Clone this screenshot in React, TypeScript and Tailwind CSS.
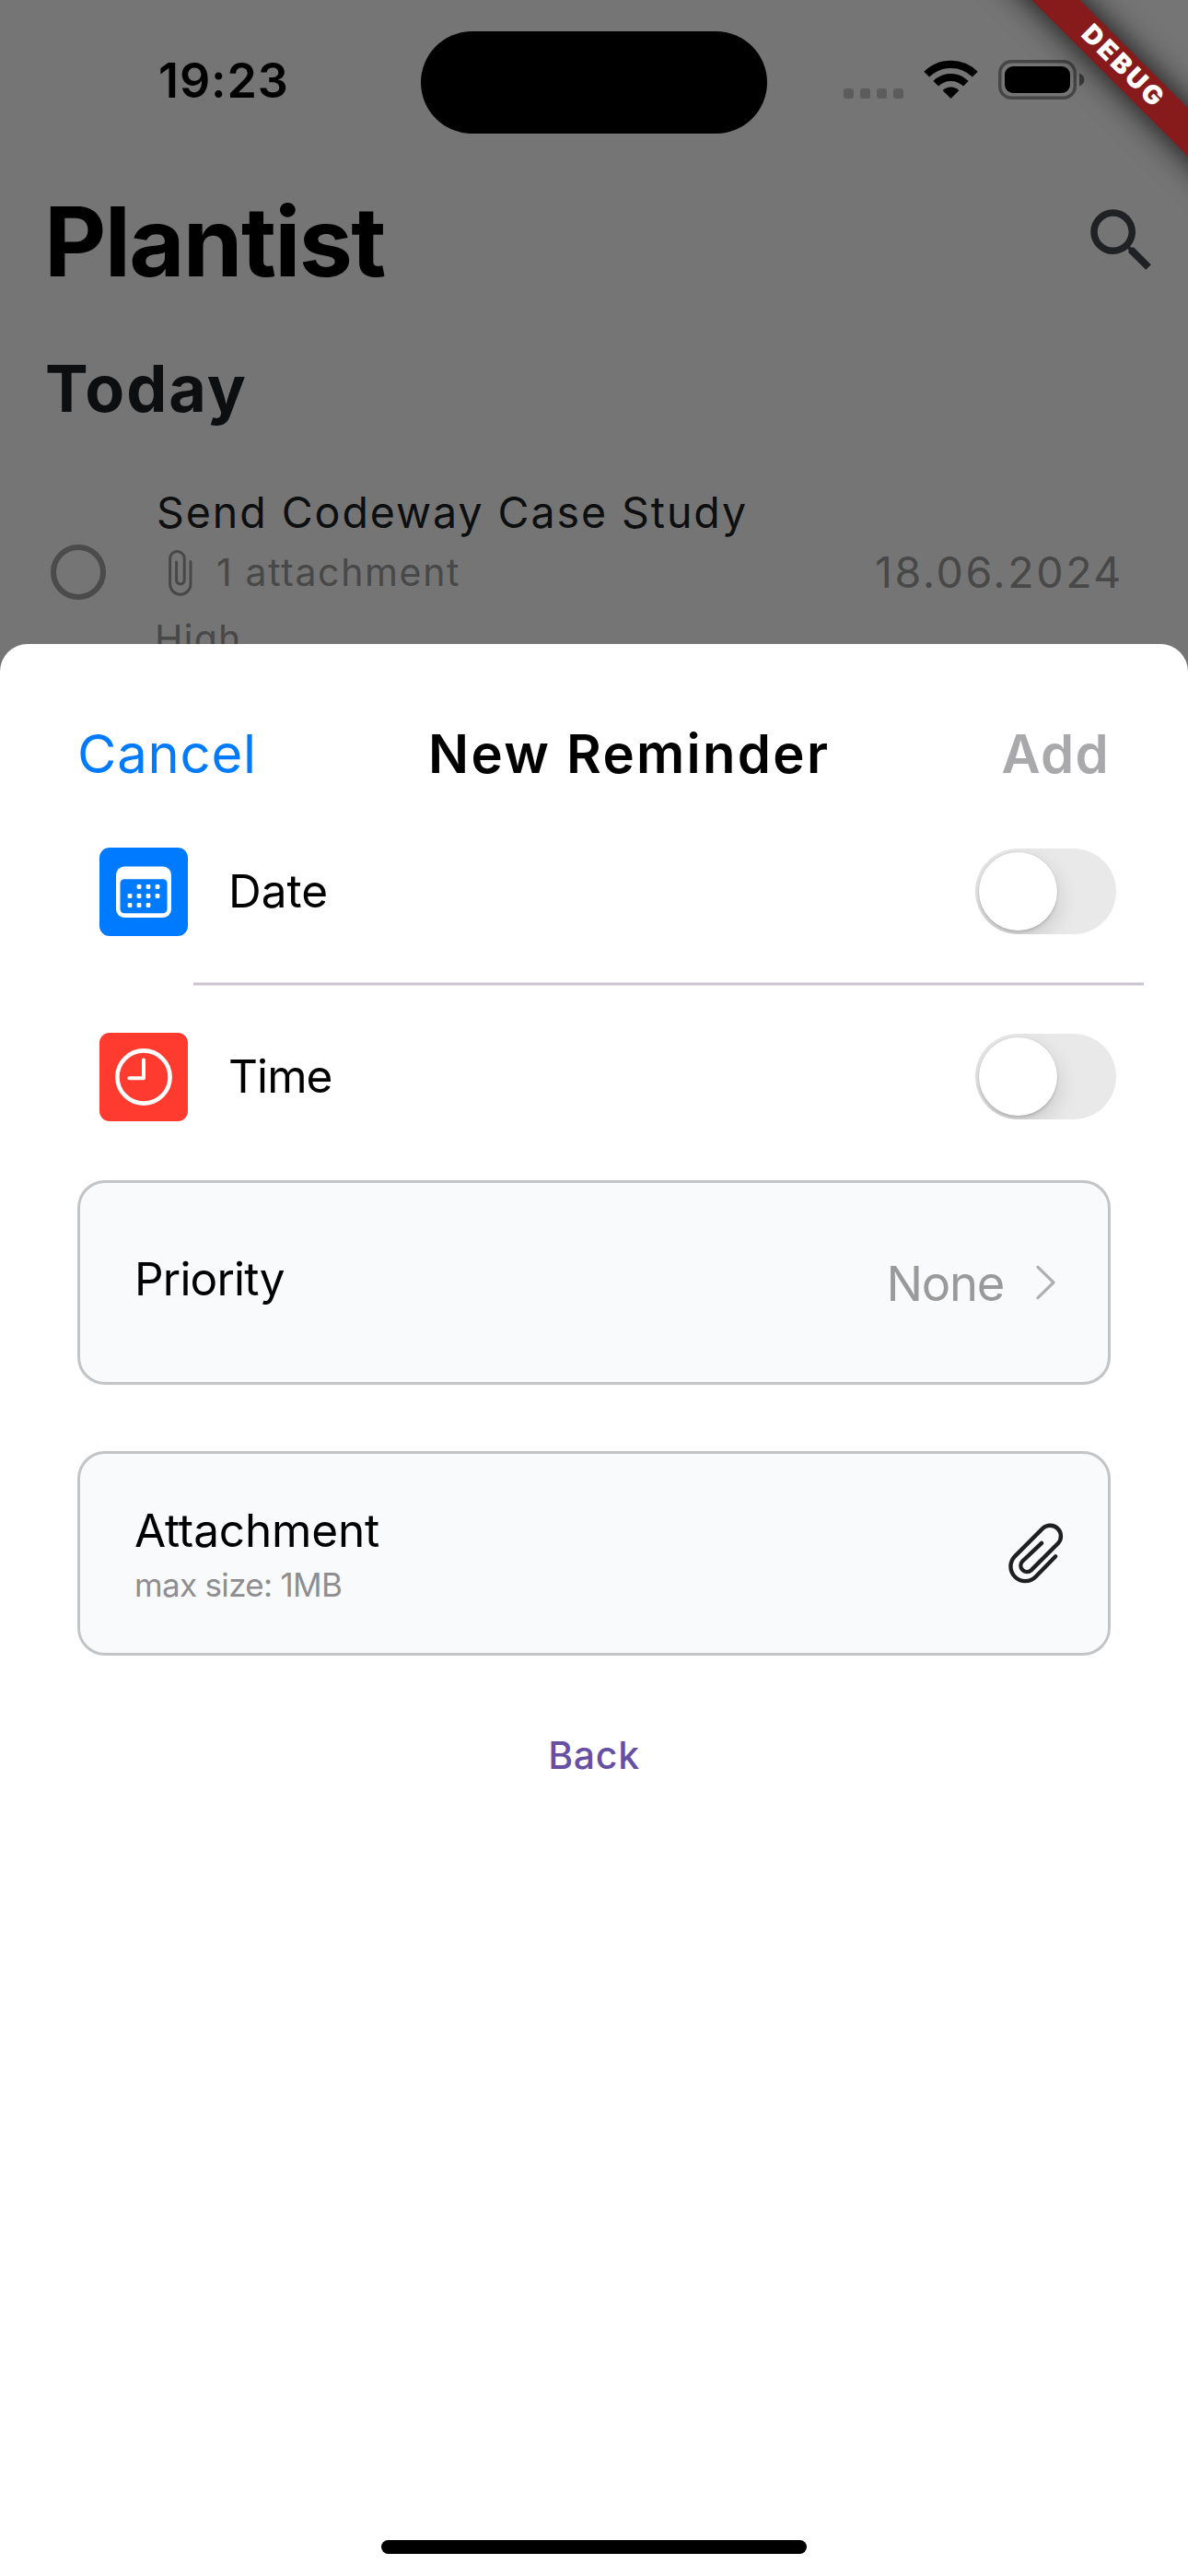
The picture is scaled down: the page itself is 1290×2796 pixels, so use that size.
import type { ReactNode } from 'react';

function StatusBar() {
  return (
    <div className="flex h-[178px] items-center pl-[172px] text-black">
      <div className="-mt-[2px] w-[285px] text-[52px] font-semibold leading-none tracking-[0.9px]">19:23</div>
      <div className="h-[111px] w-[376px] rounded-full bg-black" />
      <div className="ml-[83px] mt-[25px] flex gap-[7px]">
        {[0, 1, 2, 3].map((i) => (
          <span key={i} className="size-[11px] rounded-[3px] bg-[#5c5c5c]" />
        ))}
      </div>
      <svg className="-mt-[5px] ml-[22px] h-[43px] w-[59px]" viewBox="0 0 59 43" fill="none">
        <path d="M3.2 15.7A37.3 37.3 0 0 1 55.8 15.7" stroke="#000" strokeWidth="8.2" />
        <path d="M13.2 25.7A23 23 0 0 1 45.8 25.7" stroke="#000" strokeWidth="8" />
        <path d="M29.5 42L20.7 33.2A12.6 12.6 0 0 1 38.3 33.2Z" fill="#000" />
      </svg>
      <svg className="-mt-[5px] ml-[22px] h-[43px] w-[95px]" viewBox="0 0 95 43" fill="none">
        <rect x="1.75" y="1.75" width="81.5" height="39.5" rx="12.5" stroke="#464646" strokeWidth="3.5" />
        <rect x="7" y="7" width="71" height="29" rx="9" fill="#000" />
        <path d="M88 14.5C95.2 17 95.2 26 88 28.5Z" fill="#3a3a3a" />
      </svg>
    </div>
  );
}

function DebugBanner() {
  return (
    <div className="pointer-events-none absolute right-0 top-0 size-[260px] overflow-hidden">
      <div className="absolute left-[-52px] top-[53px] flex h-[37px] w-[480px] rotate-45 items-center justify-center bg-[#871a1b] shadow-[0_0_34px_1px_rgba(0,0,0,0.85)]">
        <span className="-mt-[2px] pl-[4px] text-[28.5px] font-black leading-none tracking-[3.1px] text-white">DEBUG</span>
      </div>
    </div>
  );
}

function ReminderItem() {
  return (
    <div className="flex h-[196px] items-center pl-[55px] pr-[70px]">
      <span className="size-[60px] shrink-0 rounded-full border-[6px] border-[#4b4b4b]" />
      <div className="ml-[55px] flex-1 text-[41px] leading-none text-[#484848]">
        <div className="flex h-[66px] items-center whitespace-nowrap text-[46.5px] tracking-[1.94px] text-[#0d0e0f]">
          Send Codeway Case Study
        </div>
        <div className="flex h-[65px] items-center tracking-[1.64px]">
          <svg className="ml-[13px] mr-[26px] h-[50px] w-[26px]" viewBox="0 0 26 50" fill="none" stroke="#484848" strokeWidth="3" strokeLinecap="round">
            <path d="M24 12.5V37A11.2 11.2 0 0 1 1.6 37V9.3A7.8 7.8 0 0 1 17.2 9.3V32.6A4.3 4.3 0 0 1 8.6 32.6V13" />
          </svg>
          1 attachment
        </div>
        <div className="-ml-[2px] flex h-[65px] items-center pt-[13px] tracking-[1.15px]">High</div>
      </div>
      <span className="text-[46.5px] leading-none tracking-[2.59px] text-[#484848]">18.06.2024</span>
    </div>
  );
}

function Toggle() {
  return (
    <div className="h-[93px] w-[153px] overflow-hidden rounded-full bg-[#e9e9e9] p-[4px]">
      <div className="size-[85px] rounded-full bg-white shadow-[0_9px_24px_rgba(0,0,0,0.15),0_3px_3px_rgba(0,0,0,0.1),0_0_0_1px_rgba(0,0,0,0.04)]" />
    </div>
  );
}

function CalendarIcon() {
  const dots = [
    [25, 22], [35, 22], [45, 22],
    [15, 32], [25, 32], [35, 32], [45, 32],
    [15, 42], [25, 42], [35, 42],
  ];
  return (
    <svg className="size-[60px]" viewBox="0 -2.5 60 60">
      <rect y="0" width="60" height="55.5" rx="9" fill="#fff" />
      <rect x="4.5" y="13.7" width="51" height="37" rx="4.5" fill="#007aff" />
      {dots.map(([x, y]) => (
        <rect key={`${x}-${y}`} x={x - 2.4} y={y - 2.4} width="4.8" height="4.8" rx="1.3" fill="#fff" />
      ))}
    </svg>
  );
}

function ClockIcon() {
  return (
    <svg className="size-[62px]" viewBox="0 0 62 62" fill="none" stroke="#fff">
      <circle cx="31" cy="31" r="28.6" strokeWidth="4.6" />
      <path d="M31 12.5V32.3H15.3" strokeWidth="4" strokeLinecap="round" strokeLinejoin="round" />
    </svg>
  );
}

function Card({ children }: { children: ReactNode }) {
  return (
    <div className="mx-[84px] flex h-[222px] items-center justify-between rounded-[30px] border-[3px] border-[#c3c4c6] bg-[#f9fafc] leading-none">
      {children}
    </div>
  );
}

export default function App() {
  return (
    <div className="relative flex h-[2796px] w-[1290px] flex-col overflow-hidden bg-[#757575] font-['Inter',sans-serif]">
      <div className="h-[699px] shrink-0">
        <StatusBar />
        <div className="flex h-[168px] items-center justify-between pl-[48px] pr-[27px]">
          <h1 className="text-[104px] font-bold leading-none tracking-[-1.7px] text-black">Plantist</h1>
          <svg className="-mt-[2px] size-[90px]" viewBox="0 0 24 24" fill="#202124">
            <path d="M15.5 14h-.79l-.28-.27A6.471 6.471 0 0 0 16 9.5 6.5 6.5 0 1 0 9.5 16c1.61 0 3.09-.59 4.23-1.57l.27.28v.79l5 4.99L20.49 19l-4.99-5zm-6 0C7.01 14 5 11.99 5 9.5S7.01 5 9.5 5 14 7.01 14 9.5 11.99 14 9.5 14z" />
          </svg>
        </div>
        <h2 className="flex h-[177px] items-center pb-[26px] pl-[49px] text-[70px] font-bold leading-none tracking-[2px] text-[#0d0e0f]">
          Today
        </h2>
        <ReminderItem />
      </div>

      <div className="relative flex flex-1 flex-col rounded-t-[30px] bg-white text-black">
        <div className="mt-[60px] flex h-[118px] items-center justify-between pl-[84px] pr-[85px] text-[58px] leading-none">
          <span className="tracking-[0.77px] text-[#007aff]">Cancel</span>
          <span className="font-semibold tracking-[2.3px]">New Reminder</span>
          <span className="font-semibold tracking-[1.24px] text-[#a9a9ab]">Add</span>
        </div>

        <div className="flex h-[181px] items-center pl-[108px] pr-[78px] text-[49.5px] leading-none">
          <div className="flex size-[96px] items-center justify-center rounded-[11px] bg-[#007aff]">
            <CalendarIcon />
          </div>
          <span className="ml-[44px] flex-1 pt-[1px] tracking-normal">Date</span>
          <Toggle />
        </div>
        <div className="ml-[210px] mr-[48px] mt-[8px] h-[4px] border-y border-[#e3e0e7] bg-[#cac4d0]" />
        <div className="flex h-[197px] items-center pl-[108px] pr-[78px] text-[49.5px] leading-none">
          <div className="flex size-[96px] items-center justify-center rounded-[11px] bg-[#ff3b30]">
            <ClockIcon />
          </div>
          <span className="ml-[44px] flex-1 pt-[1px] tracking-[-0.9px]">Time</span>
          <Toggle />
        </div>

        <div className="mt-[14px] flex flex-col gap-[72px]">
          <Card>
            <span className="-mt-[7px] pl-[59px] text-[49.5px] tracking-[-0.8px]">Priority</span>
            <span className="flex items-center pr-[57px] pt-[2px] text-[52.5px] tracking-[-1.3px] text-[#9a9a9a]">
              None
              <svg className="-mt-[2px] ml-[35px] h-[38px] w-[21px]" viewBox="0 0 21 38" fill="none">
                <path d="M2 2.3L19 19L2 35.7" stroke="#b0b0b2" strokeWidth="3.2" strokeLinecap="round" strokeLinejoin="round" />
              </svg>
            </span>
          </Card>
          <Card>
            <div className="mt-[10px] pl-[59px]">
              <div className="flex h-[59px] items-center pt-[1px] text-[49.5px] tracking-[-0.15px]">Attachment</div>
              <div className="flex h-[60px] items-center text-[35px] tracking-[-0.68px] text-[#8e8e90]">max size: 1MB</div>
            </div>
            <svg className="mr-[48px] h-[66px] w-[60px]" viewBox="1095.5 1652.5 60 66" fill="none" stroke="#1f1f1f" strokeWidth="4.4" strokeLinecap="round">
              <path d="M1146.7 1688.8L1125 1711A15.8 15.8 0 0 1 1102.6 1688.6L1133 1658.2A11.65 11.65 0 0 1 1149.5 1674.6L1120.2 1703.8A6.8 6.8 0 0 1 1110.6 1694.2L1131.6 1674.4" />
            </svg>
          </Card>
        </div>

        <div className="mt-[78px] flex h-[60px] items-center justify-center text-[41px] font-medium leading-none tracking-[0.71px] text-[#6750a4]">
          Back
        </div>
        <div className="mx-auto mb-[24px] mt-auto h-[15px] w-[462px] rounded-full bg-black" />
      </div>

      <DebugBanner />
    </div>
  );
}
